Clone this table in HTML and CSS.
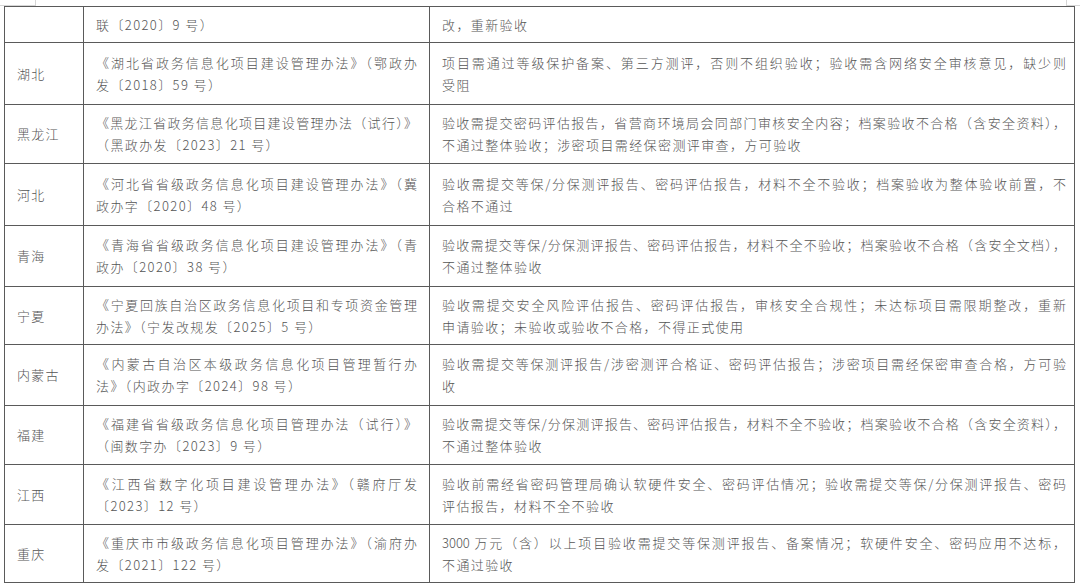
FILE: index.html
```html
<!DOCTYPE html>
<html lang="zh-CN">
<head>
<meta charset="utf-8">
<title>政务信息化项目验收要求</title>
<link rel="stylesheet" href="styles.css">
</head>
<body>
<div class="page">
  <div class="marks">
    <span class="mark mark-left"></span>
    <span class="mark mark-right"></span>
  </div>
  <table class="grid">
    <colgroup>
      <col class="c-region">
      <col class="c-law">
      <col class="c-req">
    </colgroup>
    <tbody>
      <tr>
        <td class="region h36"></td>
        <td class="law"><span class="ln">联〔2020〕9 号）</span></td>
        <td class="req"><span class="ln">改，重新验收</span></td>
      </tr>
      <tr>
        <td class="region h62">湖北</td>
        <td class="law"><span class="ln full">《湖北省政务信息化项目建设管理办法》（鄂政办</span><span class="ln">发〔2018〕59 号）</span></td>
        <td class="req"><span class="ln full">项目需通过等级保护备案、第三方测评，否则不组织验收；验收需含网络安全审核意见，缺少则</span><span class="ln">受阻</span></td>
      </tr>
      <tr>
        <td class="region h59">黑龙江</td>
        <td class="law"><span class="ln full">《黑龙江省政务信息化项目建设管理办法（试行）》</span><span class="ln">（黑政办发〔2023〕21 号）</span></td>
        <td class="req"><span class="ln full">验收需提交密码评估报告，省营商环境局会同部门审核安全内容；档案验收不合格（含安全资料），</span><span class="ln">不通过整体验收；涉密项目需经保密测评审查，方可验收</span></td>
      </tr>
      <tr>
        <td class="region h62">河北</td>
        <td class="law"><span class="ln full">《河北省省级政务信息化项目建设管理办法》（冀</span><span class="ln">政办字〔2020〕48 号）</span></td>
        <td class="req"><span class="ln full">验收需提交等保/分保测评报告、密码评估报告，材料不全不验收；档案验收为整体验收前置，不</span><span class="ln">合格不通过</span></td>
      </tr>
      <tr>
        <td class="region h61">青海</td>
        <td class="law"><span class="ln full">《青海省省级政务信息化项目建设管理办法》（青</span><span class="ln">政办〔2020〕38 号）</span></td>
        <td class="req"><span class="ln full">验收需提交等保/分保测评报告、密码评估报告，材料不全不验收；档案验收不合格（含安全文档），</span><span class="ln">不通过整体验收</span></td>
      </tr>
      <tr>
        <td class="region h58">宁夏</td>
        <td class="law"><span class="ln full">《宁夏回族自治区政务信息化项目和专项资金管理</span><span class="ln">办法》（宁发改规发〔2025〕5 号）</span></td>
        <td class="req"><span class="ln full">验收需提交安全风险评估报告、密码评估报告，审核安全合规性；未达标项目需限期整改，重新</span><span class="ln">申请验收；未验收或验收不合格，不得正式使用</span></td>
      </tr>
      <tr>
        <td class="region h61">内蒙古</td>
        <td class="law"><span class="ln full">《内蒙古自治区本级政务信息化项目管理暂行办</span><span class="ln">法》（内政办字〔2024〕98 号）</span></td>
        <td class="req"><span class="ln full">验收需提交等保测评报告/涉密测评合格证、密码评估报告；涉密项目需经保密审查合格，方可验</span><span class="ln">收</span></td>
      </tr>
      <tr>
        <td class="region h59">福建</td>
        <td class="law"><span class="ln full">《福建省省级政务信息化项目管理办法（试行）》</span><span class="ln">（闽数字办〔2023〕9 号）</span></td>
        <td class="req"><span class="ln full">验收需提交等保/分保测评报告、密码评估报告，材料不全不验收；档案验收不合格（含安全资料），</span><span class="ln">不通过整体验收</span></td>
      </tr>
      <tr>
        <td class="region h60">江西</td>
        <td class="law"><span class="ln full">《江西省数字化项目建设管理办法》（赣府厅发</span><span class="ln">〔2023〕12 号）</span></td>
        <td class="req"><span class="ln full">验收前需经省密码管理局确认软硬件安全、密码评估情况；验收需提交等保/分保测评报告、密码</span><span class="ln">评估报告，材料不全不验收</span></td>
      </tr>
      <tr>
        <td class="region h58">重庆</td>
        <td class="law"><span class="ln full">《重庆市市级政务信息化项目管理办法》（渝府办</span><span class="ln">发〔2021〕122 号）</span></td>
        <td class="req"><span class="ln full">3000 万元（含）以上项目验收需提交等保测评报告、备案情况；软硬件安全、密码应用不达标，</span><span class="ln">不通过验收</span></td>
      </tr>
    </tbody>
  </table>
</div>
</body>
</html>
```

FILE: styles.css
```css
* {
  box-sizing: border-box;
}

html, body {
  margin: 0;
  padding: 0;
  background: #ffffff;
}

body {
  width: 1080px;
  height: 586px;
  overflow: hidden;
  font-family: "Noto Sans CJK SC", "Noto Sans", sans-serif;
  font-size: 13px;
  font-weight: 300;
  color: #555555;
}

.page {
  width: 1080px;
}

.marks {
  display: flex;
  justify-content: space-between;
  height: 6px;
}

.mark {
  display: block;
  height: 6px;
  border-bottom: 1px solid #d6d6d6;
}

.mark-left {
  width: 36px;
  border-right: 1px solid #d6d6d6;
}

.mark-right {
  width: 14px;
  border-left: 1px solid #d6d6d6;
}

.grid {
  margin-left: 4px;
  width: 1070px;
  table-layout: fixed;
  border-collapse: collapse;
  border: 1px solid #5a5a5a;
}

.c-region { width: 79px; }
.c-law { width: 346px; }
.c-req { width: 645px; }

.grid td {
  border: 1px solid #5a5a5a;
  padding: 0 12px;
  vertical-align: middle;
  line-height: 22px;
}

.grid td.req {
  padding-right: 8px;
}

.region {
  letter-spacing: 1.2px;
}

.h36 { height: 36px; }
.h58 { height: 58px; }
.h59 { height: 59px; }
.h60 { height: 60px; }
.h61 { height: 61px; }
.h62 { height: 62px; }

.ln {
  display: block;
  letter-spacing: 1.4px;
}

.ln.full {
  letter-spacing: 0;
  text-align: justify;
  text-align-last: justify;
}
```
